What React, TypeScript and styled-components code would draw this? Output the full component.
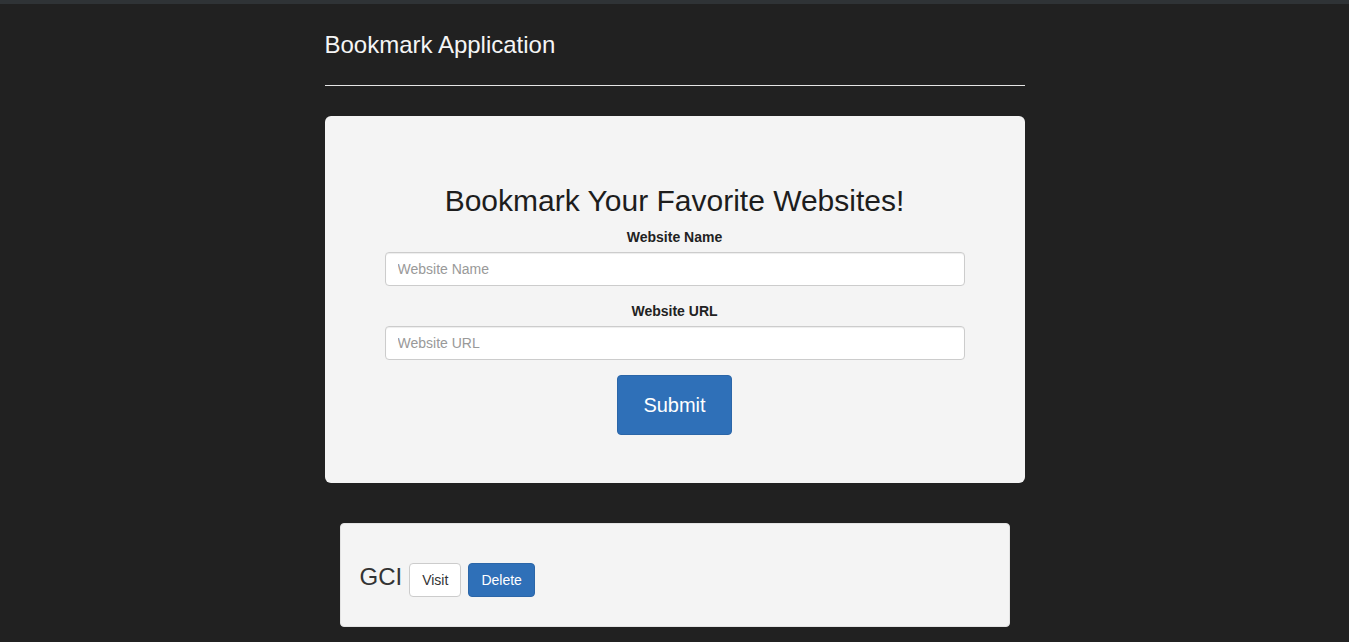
import React from "react";
import styled, { createGlobalStyle } from "styled-components";

const Global = createGlobalStyle`
  html, body { margin: 0; padding: 0; }
  body {
    background: #212121;
    font-family: "Liberation Sans", Arial, Helvetica, sans-serif;
    font-size: 14px;
    line-height: 1.42857;
    color: #333;
  }
  * { box-sizing: border-box; }
`;

const TopStrip = styled.div`
  height: 4px;
  background: #2f3336;
`;

const Container = styled.div`
  width: 700px;
  margin: 0 auto;
  padding-top: 21px;
  padding-bottom: 20px;
`;

const Header = styled.header`
  padding-bottom: 20px;
  border-bottom: 1px solid #e5e5e5;
  margin-bottom: 30px;
`;

const AppTitle = styled.h3`
  margin: 0;
  font-size: 24px;
  font-weight: 400;
  line-height: 40px;
  color: #f5f5f5;
`;

const Jumbotron = styled.section`
  background: #f4f4f4;
  border-radius: 6px;
  padding: 48px 60px;
  text-align: center;
  margin-bottom: 40px;
`;

const Heading = styled.h2`
  margin: 20px 0 10px;
  font-size: 30px;
  font-weight: 400;
  line-height: 33px;
  color: #1d1d1d;
`;

const Form = styled.form`
  display: flex;
  flex-direction: column;
  align-items: stretch;
`;

const FormGroup = styled.div`
  display: flex;
  flex-direction: column;
  align-items: center;
  margin-bottom: 15px;
`;

const Label = styled.label`
  font-weight: 700;
  font-size: 14px;
  line-height: 20px;
  margin-bottom: 5px;
  color: #222;
`;

const Input = styled.input`
  width: 100%;
  height: 34px;
  padding: 6px 12px;
  font-family: inherit;
  font-size: 14px;
  color: #555;
  background: #fff;
  border: 1px solid #ccc;
  border-radius: 4px;
  box-shadow: inset 0 1px 1px rgba(0, 0, 0, 0.075);
  &::placeholder { color: #999; }
`;

const Button = styled.button<{ $variant: "primary" | "default"; $size?: "lg" }>`
  display: inline-block;
  font-family: inherit;
  font-size: ${(p) => (p.$size === "lg" ? "20px" : "14px")};
  line-height: ${(p) => (p.$size === "lg" ? "26px" : "20px")};
  padding: ${(p) => (p.$size === "lg" ? "16px 25px" : "6px 12px")};
  border-radius: 4px;
  border: 1px solid ${(p) => (p.$variant === "primary" ? "#2b66a8" : "#ccc")};
  background: ${(p) => (p.$variant === "primary" ? "#2f70b8" : "#fff")};
  color: ${(p) => (p.$variant === "primary" ? "#fff" : "#333")};
  cursor: pointer;
`;

const SubmitRow = styled.div`
  display: flex;
  justify-content: center;
`;

const Well = styled.div`
  margin: 0 15px;
  background: #f4f4f4;
  border: 1px solid #e3e3e3;
  border-radius: 4px;
  padding: 39px 19px 29px;
  display: flex;
  align-items: baseline;
`;

const SiteName = styled.h3`
  margin: 0 7px 0 0;
  font-size: 24px;
  font-weight: 400;
  line-height: 26px;
  color: #333;
`;

const ActionGap = styled.span`
  width: 7px;
`;

export default function App() {
  return (
    <>
      <Global />
      <TopStrip />
      <Container>
        <Header>
          <AppTitle>Bookmark Application</AppTitle>
        </Header>
        <Jumbotron>
          <Heading>Bookmark Your Favorite Websites!</Heading>
          <Form onSubmit={(e) => e.preventDefault()}>
            <FormGroup>
              <Label htmlFor="siteName">Website Name</Label>
              <Input id="siteName" type="text" placeholder="Website Name" />
            </FormGroup>
            <FormGroup>
              <Label htmlFor="siteUrl">Website URL</Label>
              <Input id="siteUrl" type="text" placeholder="Website URL" />
            </FormGroup>
            <SubmitRow>
              <Button type="submit" $variant="primary" $size="lg">
                Submit
              </Button>
            </SubmitRow>
          </Form>
        </Jumbotron>
        <Well>
          <SiteName>GCI</SiteName>
          <Button $variant="default">Visit</Button>
          <ActionGap />
          <Button $variant="primary">Delete</Button>
        </Well>
      </Container>
    </>
  );
}
